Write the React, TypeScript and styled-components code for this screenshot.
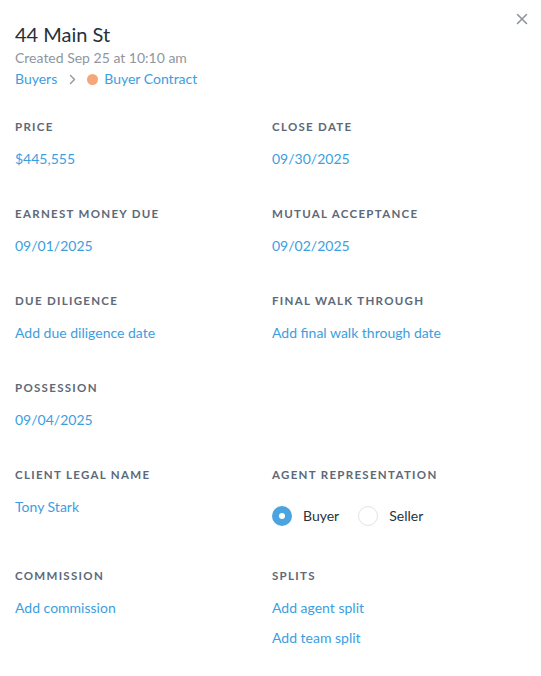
import styled, { createGlobalStyle } from 'styled-components'

const GlobalStyle = createGlobalStyle`
  html, body {
    margin: 0;
    padding: 0;
    background: #ffffff;
  }
  body {
    font-family: Lato, "Open Sans", Arial, sans-serif;
    -webkit-font-smoothing: antialiased;
  }
`

const Panel = styled.div`
  position: relative;
  width: 541px;
  min-height: 676px;
  box-sizing: border-box;
  padding: 22px 15px 0 15px;
  background: #ffffff;
`

const CloseButton = styled.button`
  position: absolute;
  top: 11px;
  right: 11px;
  width: 16px;
  height: 16px;
  padding: 0;
  border: none;
  background: transparent;
  display: flex;
  align-items: center;
  justify-content: center;
  cursor: pointer;
`

const Header = styled.header`
  display: flex;
  flex-direction: column;
  margin-bottom: 30px;
`

const Title = styled.h1`
  margin: 0;
  font-size: 20px;
  line-height: 24px;
  font-weight: 400;
  color: #27303a;
`

const Meta = styled.div`
  font-size: 14px;
  line-height: 20px;
  color: #8f969e;
  margin-top: 2px;
`

const Breadcrumb = styled.nav`
  display: flex;
  align-items: center;
  font-size: 14px;
  line-height: 20px;
  color: #3b9ee0;
  margin-top: 1px;
`

const Crumb = styled.span`
  color: #3b9ee0;
`

const Chevron = styled.span`
  display: inline-flex;
  margin: 0 11px 0 12px;
`

const StatusDot = styled.span<{ $color: string }>`
  width: 11px;
  height: 11px;
  border-radius: 50%;
  background: ${({ $color }) => $color};
  margin-right: 6px;
`

const FieldGrid = styled.div`
  display: grid;
  grid-template-columns: 257px 1fr;
  row-gap: 37px;
`

const Field = styled.div<{ $extraBottom?: number }>`
  display: flex;
  flex-direction: column;
  padding-bottom: ${({ $extraBottom }) => $extraBottom ?? 0}px;
`

const Label = styled.div`
  font-size: 11.5px;
  line-height: 16px;
  font-weight: 700;
  letter-spacing: 1.3px;
  text-transform: uppercase;
  color: #5d6977;
  margin-bottom: 14px;
`

const Value = styled.a`
  font-size: 14px;
  line-height: 20px;
  color: #3b9ee0;
  text-decoration: none;
  cursor: pointer;

  & + & {
    margin-top: 10px;
  }
`

const RadioGroup = styled.div`
  display: flex;
  align-items: center;
  margin-top: 9px;
`

const RadioOption = styled.label`
  display: flex;
  align-items: center;
  font-size: 14px;
  line-height: 20px;
  color: #2a323c;
  margin-right: 19px;
`

const RadioCircle = styled.span<{ $checked?: boolean }>`
  box-sizing: border-box;
  width: 20px;
  height: 20px;
  border-radius: 50%;
  margin-right: 11px;
  display: flex;
  align-items: center;
  justify-content: center;
  background: ${({ $checked }) => ($checked ? '#4ba3df' : '#ffffff')};
  border: ${({ $checked }) => ($checked ? 'none' : '1px solid #e0e3e7')};

  &::after {
    content: '';
    display: ${({ $checked }) => ($checked ? 'block' : 'none')};
    width: 6px;
    height: 6px;
    border-radius: 50%;
    background: #ffffff;
  }
`

const CloseIcon = () => (
  <svg width="12" height="12" viewBox="0 0 12 12" fill="none">
    <path d="M1.5 1.5 L10.5 10.5 M10.5 1.5 L1.5 10.5" stroke="#8b9097" strokeWidth="1.5" strokeLinecap="round" />
  </svg>
)

const ChevronIcon = () => (
  <svg width="7" height="11" viewBox="0 0 7 11" fill="none">
    <path d="M1.5 1.5 L5.5 5.5 L1.5 9.5" stroke="#8f969e" strokeWidth="1.4" strokeLinecap="round" strokeLinejoin="round" />
  </svg>
)

type FieldDef = { label: string; values?: string[]; radio?: boolean; empty?: boolean }

const fields: FieldDef[] = [
  { label: 'Price', values: ['$445,555'] },
  { label: 'Close Date', values: ['09/30/2025'] },
  { label: 'Earnest Money Due', values: ['09/01/2025'] },
  { label: 'Mutual Acceptance', values: ['09/02/2025'] },
  { label: 'Due Diligence', values: ['Add due diligence date'] },
  { label: 'Final Walk Through', values: ['Add final walk through date'] },
  { label: 'Possession', values: ['09/04/2025'] },
  { label: '', empty: true },
  { label: 'Client Legal Name', values: ['Tony Stark'] },
  { label: 'Agent Representation', radio: true },
  { label: 'Commission', values: ['Add commission'] },
  { label: 'Splits', values: ['Add agent split', 'Add team split'] },
]

export default function App() {
  return (
    <>
      <GlobalStyle />
      <Panel>
        <CloseButton aria-label="Close">
          <CloseIcon />
        </CloseButton>
        <Header>
          <Title>44 Main St</Title>
          <Meta>Created Sep 25 at 10:10 am</Meta>
          <Breadcrumb>
            <Crumb>Buyers</Crumb>
            <Chevron>
              <ChevronIcon />
            </Chevron>
            <StatusDot $color="#f4a77a" />
            <Crumb>Buyer Contract</Crumb>
          </Breadcrumb>
        </Header>
        <FieldGrid>
          {fields.map((f, i) =>
            f.empty ? (
              <div key={i} />
            ) : (
              <Field key={i} $extraBottom={f.radio || f.label === 'Client Legal Name' ? 5 : 0}>
                <Label>{f.label}</Label>
                {f.radio ? (
                  <RadioGroup>
                    <RadioOption>
                      <RadioCircle $checked />
                      Buyer
                    </RadioOption>
                    <RadioOption>
                      <RadioCircle />
                      Seller
                    </RadioOption>
                  </RadioGroup>
                ) : (
                  f.values?.map((v) => <Value key={v}>{v}</Value>)
                )}
              </Field>
            )
          )}
        </FieldGrid>
      </Panel>
    </>
  )
}
